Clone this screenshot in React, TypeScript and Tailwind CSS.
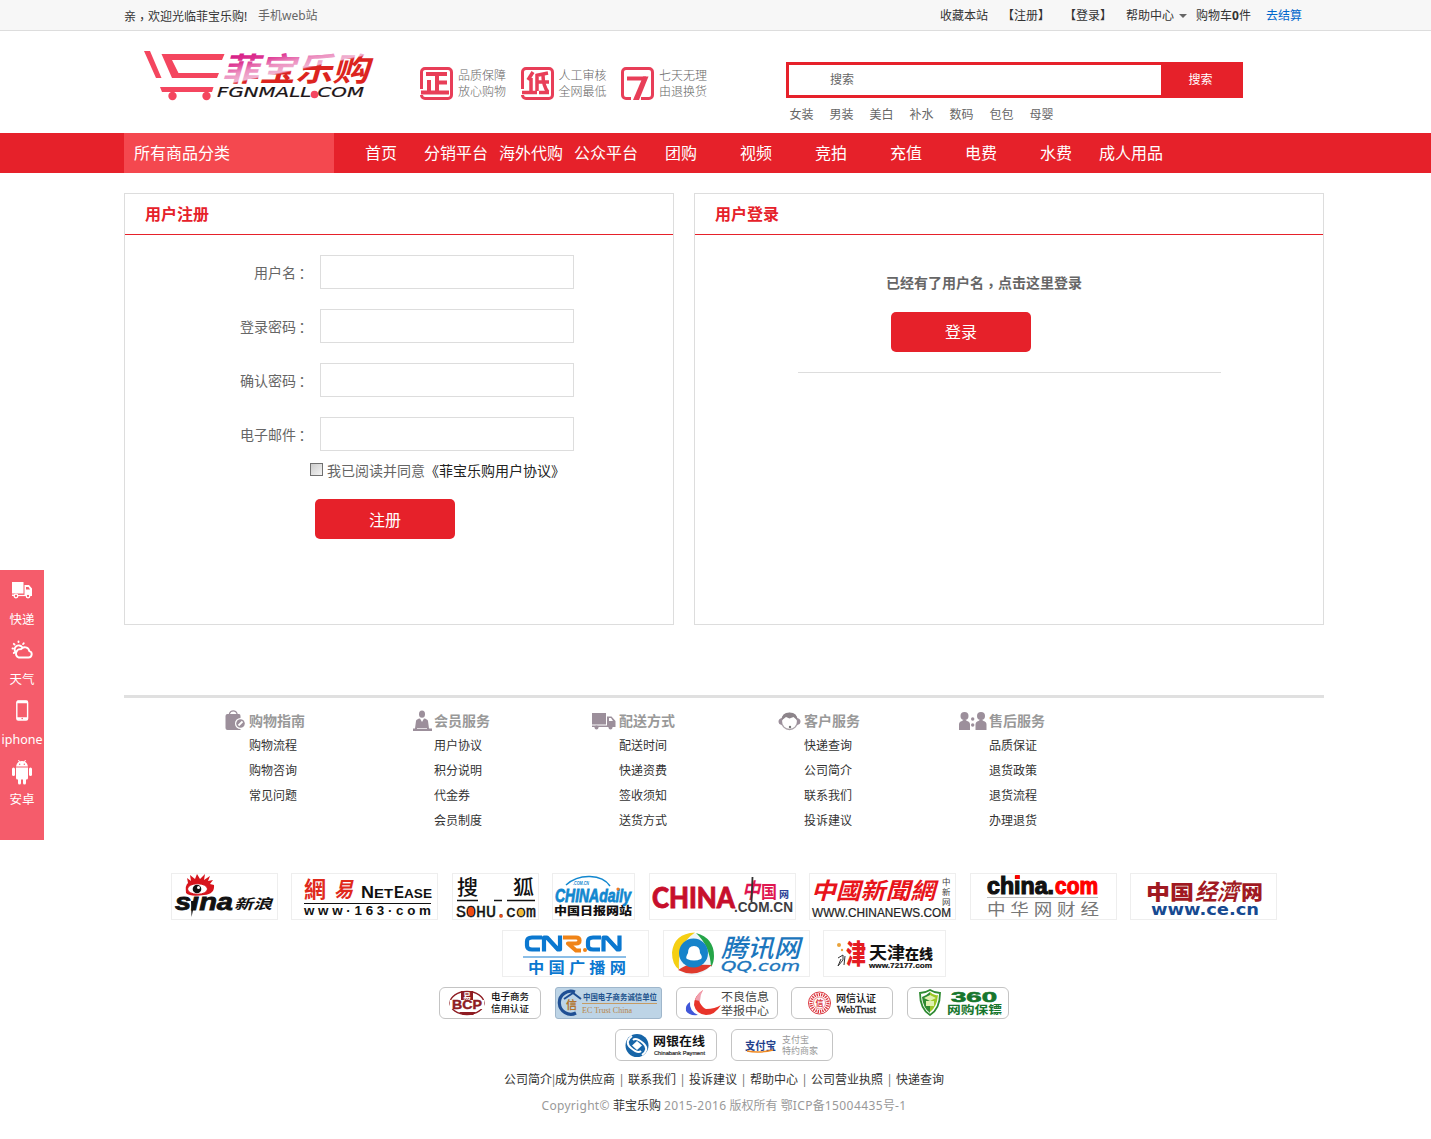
import React from 'react';

const cjk = "font-['Noto_Sans','Noto_Sans_CJK_SC',sans-serif]";
const sans = "font-['Liberation_Sans','Noto_Sans_CJK_SC',sans-serif]";
const serif = "font-['Liberation_Serif','Noto_Sans_CJK_SC',serif]";
const wide = "font-['DejaVu_Sans','Noto_Sans_CJK_SC',sans-serif]";

/** Full-width punctuation centred in its em box. */
const Colon = () => <span className="relative top-px -left-px font-['Noto_Sans_CJK_TC',sans-serif]">：</span>;
const Comma = () => <span className="relative top-[3px] font-['Noto_Sans_CJK_TC',sans-serif]">，</span>;

type TProps = {
  x: number; y: number; s: number; w?: number; f?: string; fill?: string; b?: number | string;
  italic?: boolean; stroke?: string; sw?: number; children: string;
};
/** One line of logo lettering, fitted to a width. */
const T = ({ x, y, s, w, f = cjk, fill = '#111', b = 400, italic, stroke, sw, children }: TProps) => (
  <text x={x} y={y} fontSize={s} textLength={w} lengthAdjust="spacingAndGlyphs" className={f} fill={fill}
    fontWeight={b} fontStyle={italic ? 'italic' : undefined} stroke={stroke} strokeWidth={sw}>
    {children}
  </text>
);

const Logo = () => (
  <svg className="block" width="240" height="60" viewBox="140 45 240 60">
    <defs>
      <linearGradient id="brand" gradientUnits="userSpaceOnUse" x1="300" y1="35.700" x2="307.400" y2="71">
        <stop offset="0" stopColor="#d3127f" /><stop offset="0.4" stopColor="#dd3793" /><stop offset="0.65" stopColor="#ec8fc0" />
        <stop offset="0.88" stopColor="#f0b4d2" /><stop offset="0.93" stopColor="#dc2420" />
      </linearGradient>
    </defs>
    <g fill="#f4465f">
      <path d="M144 51h6l11.500 27h-5.500zM161.500 54h63l-2.500 6h-50l6.500 13h40.500l-2 5h-45zM160 87h53.500l-1.500 5h-50z" />
      <circle cx="172.500" cy="96" r="4.200" /><circle cx="206.500" cy="96" r="4.200" />
    </g>
    <T x={222} y={80.5} s={32.5} w={147} b={700} italic fill="url(#brand)">菲宝乐购</T>
    <T x={217} y={97} s={13.5} w={147} f={wide} italic fill="#1c1416" stroke="#1c1416" sw={0.2}>FGNMALL.COM</T>
    <circle cx="314.500" cy="94.500" r="3.800" fill="#f4465f" />
  </svg>
);

const Seal = ({ kind }: { kind: string }) => (
  <svg className="block shrink-0" width="33" height="33" viewBox="0 0 33 33" fill="none" stroke="#e83e58">
    {kind === '7' ? (
      <>
        <path strokeWidth="3" d="M10 31.500H5A3.500 3.500 0 0 1 1.500 28V5A3.500 3.500 0 0 1 5 1.500H28A3.500 3.500 0 0 1 31.500 5V28a3.500 3.500 0 0 1-3.500 3.500H20" />
        <path strokeWidth="4" d="M6 11.500H25" /><path fill="#e83e58" stroke="none" d="M22 9.500h5.500L18 33H12z" />
      </>
    ) : (
      <>
        <path strokeWidth="3" d="M1.500 22V5a3.500 3.500 0 0 1 3.500-3.500H28A3.500 3.500 0 0 1 31.500 5V28a3.500 3.500 0 0 1-3.500 3.500H5A3.500 3.500 0 0 1 1.500 28" />
        {kind === '正' ? (
          <path strokeWidth="4" d="M6 7H27M17 7V25M18 15.500H27M9 13V25M1 25.500H29" />
        ) : (
          <path strokeWidth="3.500" d="M12 5L7 13M10 11V25M1 25.500H16M27 6L15 8.500M16 7V24M15 15H28M22 8Q22 19 27 25M18 25.500H28" />
        )}
      </>
    )}
  </svg>
);

const badges = [['正', '品质保障', '放心购物'], ['低', '人工审核', '全网最低'], ['7', '七天无理', '由退换货']];
const nav = ['首页', '分销平台', '海外代购', '公众平台', '团购', '视频', '竞拍', '充值', '电费', '水费', '成人用品'];

const g = '#9c8f9b';
const columns = [
  { title: '购物指南', items: ['购物流程', '购物咨询', '常见问题'], icon: (
    <>
      <path fill={g} d="M8.500 6H20q1.500 0 1.500 2v14H8.500q-2 0-2-2V8q0-2 2-2Z" />
      <path fill="none" stroke={g} strokeWidth="1.200" d="M10.500 7V5.500a4 4 0 0 1 7.500 0V7" />
      <circle cx="21.500" cy="15.500" r="5.500" fill="#fff" /><circle cx="21.500" cy="15.500" r="4.300" fill={g} /><path stroke="#fff" strokeWidth="1.800" d="M19.500 17.500l4-4" />
    </>) },
  { title: '会员服务', items: ['用户协议', '积分说明', '代金券', '会员制度'], icon: (
    <>
      <ellipse cx="18" cy="6.200" rx="3" ry="3.600" fill={g} />
      <path fill={g} d="M11 20.500L12 13q.5-2 4-2.500L18 14l2-3.500q3.500.5 4 2.500l1 7.500h3V23H9v-2.500Z" /><path stroke="#fff" strokeWidth=".7" d="M13 20.500h10" />
    </>) },
  { title: '配送方式', items: ['配送时间', '快递资费', '签收须知', '送货方式'], icon: (
    <>
      <path fill={g} d="M3 5H17V16.500H3ZM3 17.500H18V19H3ZM18 8.500H22.500l4 4.500v6H18Z" />
      <path fill="#fff" d="M20 10h2l2 3h-4z" /><circle cx="7.500" cy="19.500" r="2" fill={g} /><circle cx="21.500" cy="19.500" r="2" fill={g} />
    </>) },
  { title: '客户服务', items: ['快递查询', '公司简介', '联系我们', '投诉建议'], icon: (
    <>
      <ellipse cx="15.500" cy="13.500" rx="8" ry="8" fill="#fff" stroke="#aaa2a9" strokeWidth="1.300" />
      <path fill="#8d858b" d="M7.500 12.500q0-8 8-8t8 8l-4-3.500-4 1.500-3.500-1.500z" />
      <path fill={g} d="M8 10v7q-3.500-.5-3.500-3.500T8 10M23 10v7q3.500-.5 3.500-3.500T23 10" /><circle cx="16" cy="19" r="1.200" fill="#777" />
    </>) },
  { title: '售后服务', items: ['品质保证', '退货政策', '退货流程', '办理退货'], icon: (
    <>
      <circle cx="5.500" cy="8" r="4" fill={g} /><circle cx="22" cy="8" r="4" fill={g} />
      <path fill={g} d="M0 22v-5.500q0-3 3-3.500l2.500-2 2.500 2q3 .5 3 3.500V22zM16.500 22v-5.500q0-3 3-3.500l2.500-2 2.500 2q3 .5 3 3.500V22z" />
      <circle cx="13.700" cy="11" r="1.700" fill={g} /><circle cx="13.700" cy="17" r="1.700" fill={g} />
    </>) },
];

type Box = { x: number; w: number; art: React.ReactNode };

const media: Box[] = [
  { x: 171, w: 107, art: (
    <>
      <T x={175} y={910} s={23} w={58} f={sans} b={700} italic stroke="#111" sw={0.8}>sina</T>
      <path fill="#d7141c" d="M186 893q-1-8 2-10l-1-5 4 3-1-6 5 4 2-5 3 5 5-5-1 6 6-4-2 5 5-1-3 4 4 1q1 9-10 10-14 2-18-2z" />
      <ellipse cx="197.500" cy="889" rx="10" ry="5.300" fill="#fff" stroke="#d7141c" strokeWidth="1" /><circle cx="197" cy="889" r="4.300" fill="#111" /><circle cx="198.500" cy="887.500" r="1.500" fill="#fff" />
      <path fill="#111" d="M191 901h4l-3.500 16z" />
      <T x={234} y={909} s={14} w={38} b={700} italic>新浪</T>
    </>) },
  { x: 291, w: 147, art: (
    <>
      <T x={304} y={897} s={22} w={22} b={700} fill="#e02a1c">網</T><T x={334} y={897} s={21} w={19} b={700} fill="#e02a1c" italic>易</T>
      <T x={361} y={898} s={17} w={13} f={sans} b={700}>N</T><T x={374} y={898} s={13} w={19} f={sans} b={700}>ET</T>
      <T x={394} y={898} s={17} w={10} f={sans} b={700}>E</T><T x={404} y={898} s={13} w={28} f={sans} b={700}>ASE</T>
      <path stroke="#111" d="M304 903.500h127" />
      <T x={304} y={915} s={13} w={127} f={sans} b={700}>w w w · 1 6 3 · c o m</T>
    </>) },
  { x: 452, w: 87, art: (
    <>
      <T x={457} y={895} s={20} w={21} b={500}>搜</T><T x={513} y={895} s={20} w={21} b={500}>狐</T>
      <path stroke="#111" strokeWidth="1.500" d="M457 900.500h21M494 900.500h8M507 900.500h28" />
      <T x={456} y={916.5} s={16} w={80} f="font-['Liberation_Mono',monospace]" stroke="#111" sw={0.4}>SOHU.com</T>
      <ellipse cx="471" cy="911.500" rx="3.200" ry="4.500" fill="#f04c14" /><ellipse cx="521" cy="912.500" rx="2.800" ry="3.500" fill="#f2bd3a" /><circle cx="501" cy="916" r="1.800" fill="#f04c14" />
    </>) },
  { x: 552, w: 83, art: (
    <>
      <path fill="none" stroke="#1287cf" strokeWidth="1.500" d="M566 885q10-9 24-8.500t20 9.500" />
      <T x={573} y={885} s={5} w={16} f={sans} b={700} italic fill="#1287cf">.COM.CN</T>
      <T x={555} y={901.5} s={18} w={76} f={sans} b={700} italic fill="#1287cf" stroke="#1287cf" sw={0.8}>CHINAdaily</T>
      <circle cx="618" cy="889" r="1.600" fill="#f47a20" />
      <T x={554} y={914.5} s={11} w={78} b={900}>中国日报网站</T>
    </>) },
  { x: 649, w: 147, art: (
    <>
      <T x={652} y={908} s={27.5} w={83} f="font-['Lato',sans-serif]" b={900} fill="#c70f2c" stroke="#c70f2c" sw={0.8}>CHINA</T>
      <T x={742} y={898} s={21} w={18} b={700} fill="#df1650" italic>中</T><path stroke="#333" strokeWidth="1.800" d="M752.500 877l-1 25" />
      <T x={761} y={898} s={17} w={16} b={700} fill="#df1650">国</T><T x={779} y={898} s={10} w={10} b={700} fill="#2a3e96">网</T>
      <T x={734} y={912} s={14} w={59} f={sans} b={700} fill="#3d3d42">.COM.CN</T>
    </>) },
  { x: 809, w: 147, art: (
    <>
      <T x={811} y={899} s={23} w={124} b={700} italic fill="#e8141b">中國新聞網</T>
      <T x={942} y={885} s={8.5} fill="#444">中</T><T x={942} y={895} s={8.5} fill="#444">新</T><T x={942} y={905} s={8.5} fill="#444">网</T>
      <T x={812} y={917} s={12} w={139} f={sans} fill="#222" stroke="#222" sw={0.2}>WWW.CHINANEWS.COM</T>
    </>) },
  { x: 970, w: 147, art: (
    <>
      <T x={987} y={894} s={24} w={67} f={sans} b={700} stroke="#111" sw={1.2}>china.</T>
      <T x={1055} y={894} s={24} w={43} f={sans} b={700} fill="#f00" stroke="#f00" sw={1.2}>com</T>
      <path fill="none" stroke="#f00" strokeWidth="4.500" d="M1017.500 875v4" />
      <path stroke="#bbb" d="M987 897.500h111" />
      <T x={987} y={914.5} s={15.5} w={112} fill="#777">中 华 网 财 经</T>
    </>) },
  { x: 1130, w: 147, art: (
    <>
      <T x={1146} y={900} s={20} w={48} b={900} fill="#a01922">中国</T><T x={1195} y={900} s={23} w={44} b={700} italic fill="#a01922">经濟</T>
      <T x={1241} y={900} s={20} w={22} b={900} fill="#a01922">网</T>
      <T x={1151} y={915} s={15.5} w={108} f={wide} b={700} fill="#174a91">www.ce.cn</T>
    </>) },
];

const media2: Box[] = [
  { x: 502, w: 147, art: (
    <>
      <g fill="none" stroke="#0b78d0" strokeWidth="4.200" strokeLinejoin="round">
        <path d="M542 937.500h-10q-5 0-5 4v4q0 4 5 4h8M544 951.500v-14h3l11 12h2v-14M601 937.500h-8q-5 0-5 4v4q0 4 5 4h7M603.500 951.500v-14h3l11 12h2v-14" />
        <path stroke="#f08418" d="M563 937.500h13q3.500 0 3.500 3t-3.500 3h-8l8 7h5" />
      </g>
      <circle cx="585" cy="950" r="2" fill="#f08418" />
      <path stroke="#64a8df" strokeWidth="1.500" d="M523 957h103" />
      <T x={528} y={972.500} s={15} w={98} b={700} fill="#0b78d0">中 国 广 播 网</T>
    </>) },
  { x: 662, w: 147, art: (
    <>
      <circle cx="692" cy="954" r="21" fill="#eef5fa" />
      <path fill="#f5cf13" d="M694 932.500q-21 1-23 20 0 12 7 17-2-25 16-37z" /><path fill="#25a548" d="M695 933q18 5 18 23 0 7-3 11-1-21-15-34z" /><path fill="#df3a2d" d="M677 970q18 9 34-5-10 0-17-1t-17 6z" />
      <circle cx="692.500" cy="953" r="14.500" fill="#1683ca" /><path fill="#fff" d="M686 959q-2-1 1-6 0-7 6-7t6 7q3 4 1 6-7 3-14 0" />
      <T x={720} y={956.500} s={25} w={79} fill="#1c76bd" b={500} italic>腾讯网</T>
      <T x={720} y={971} s={14} w={79} f={wide} fill="#1c76bd" stroke="#1c76bd" sw={0.3} italic>QQ.com</T>
    </>) },
  { x: 823, w: 123, art: (
    <>
      <circle cx="839" cy="945" r="2" fill="#e9a33b" /><circle cx="842" cy="950" r="1.200" fill="#e9a33b" /><path fill="none" stroke="#333" d="M838 958l5-3v5l-5 6 3-7m3 6 1-9" />
      <T x={846} y={964} s={27} w={20} b={900} fill="#e51c22">津</T>
      <T x={869} y={959} s={17} w={36} b={700}>天津</T><T x={905} y={959} s={14} w={28} b={900}>在线</T>
      <T x={869} y={968} s={8} w={63} f={sans} b={700} stroke="#111" sw={0.2}>www.72177.com</T>
    </>) },
];

const trust: Box[] = [
  { x: 439, w: 102, art: (
    <>
      <ellipse cx="467" cy="1003" rx="17" ry="11.500" fill="none" stroke="#8e1c22" strokeWidth="1.300" />
      <path fill="#8e1c22" d="M461 991h12v9h-12z" /><T x={463} y={999} s={8} fill="#fff" b={700}>易</T>
      <rect x="450" y="1000" width="34" height="9" fill="#fff" />
      <T x={452} y={1009} s={12} w={30} f={sans} b={700} fill="#8e1c22" stroke="#8e1c22" sw={0.4}>BCP</T><path fill="#8e1c22" d="M459 1012h17l-3 3h-10z" />
      <T x={491} y={1000} s={9.5} w={38} b={500}>电子商务</T><T x={491} y={1012} s={9.500} w={38} b={500}>信用认证</T>
    </>) },
  { x: 555, w: 107, art: (
    <>
      <path fill="none" stroke="#1f4f94" strokeWidth="3.200" d="M575 992a11.500 11.500 0 1 0 1 21" /><path fill="none" stroke="#1f4f94" strokeWidth="2" d="M564 999l9-6 8 6" />
      <T x={566} y={1009} s={11} b={700} fill="#b2742f">信</T>
      <T x={583} y={1000} s={8} w={74} b={700} fill="#24548e">中国电子商务诚信单位</T><path stroke="#c59b63" d="M582 1003.500h75" />
      <T x={582} y={1013} s={7.5} w={50} f={serif} fill="#b98649">EC Trust China</T>
    </>) },
  { x: 676, w: 102, art: (
    <>
      <path fill="#e8342a" d="M703 990q-6 8-3 13t6 6q9 0 15-4-6 10-15 10-10-1-12-10 0-9 9-15z" /><path fill="#4157d9" d="M690 1002q-1 9 8 13-9 1-12-4-1-6 4-9z" /><path fill="#f0a0b0" d="M703 990q-6 4-8 10l5 1q0-6 3-11z" />
      <T x={721} y={1001} s={11.5} w={48} fill="#444">不良信息</T><T x={721} y={1015} s={11.500} w={48} fill="#444">举报中心</T>
    </>) },
  { x: 791, w: 102, art: (
    <>
      <circle cx="819.500" cy="1003" r="11" fill="none" stroke="#dc3840" strokeWidth="1" /><circle cx="819.500" cy="1003" r="8.500" fill="none" stroke="#dc3840" strokeWidth="3" strokeDasharray="1.300 1" /><circle cx="819.500" cy="1003" r="6" fill="#fff" stroke="#dc3840" strokeWidth=".6" />
      <T x={815.5} y={1006} s={8} b={700} fill="#dc3840">信</T>
      <T x={836} y={1002} s={10} w={40} b={500}>网信认证</T><T x={837} y={1013} s={9.5} w={39} f={serif} stroke="#222" sw={0.3}>WebTrust</T>
    </>) },
  { x: 907, w: 102, art: (
    <>
      <path fill="#fff" stroke="#2f8b32" strokeWidth="1.800" d="M930 990q5 3 10 3 0 16-10 22-10-6-10-22 5 0 10-3z" /><path fill="#2f8b32" d="M930 992v21q-7-5-8-16 5-2 8-5z" /><path fill="#9cc726" d="M930 992q4 4 8 3-1 12-8 17z" /><path fill="#e0f1b0" d="M924 998l6-3 6 3-6 3zM926 1001h8v5h-8z" />
      <T x={951} y={1001.5} s={15} w={46} f={sans} b={700} fill="#17762d" stroke="#17762d" sw={0.6}>360</T><T x={947} y={1014} s={11.5} w={55} b={700} fill="#17762d">网购保镖</T>
    </>) },
];

const pay: Box[] = [
  { x: 615, w: 102, art: (
    <>
      <circle cx="637" cy="1045.500" r="11.500" fill="#1765a8" /><path fill="none" stroke="#fff" strokeWidth="2" d="M632 1036q-8 6-1 12 7 6 10 3M642 1055q8-6 1-12-7-6-10-3" /><path fill="#fff" d="M637 1041l5 4.500-5 4.500-5-4.500z" />
      <T x={653} y={1046} s={12} w={52} b={700}>网银在线</T><T x={654} y={1055} s={6} w={51} f={sans} stroke="#333" sw={0.2}>Chinabank Payment</T>
    </>) },
  { x: 731, w: 102, art: (
    <>
      <T x={745} y={1049.5} s={11} w={31} b={700} fill="#23408c">支付宝</T><path fill="none" stroke="#f08a22" strokeWidth="1.500" d="M747 1051q12 2.500 26-1" />
      <T x={782} y={1043} s={9} w={27} fill="#999">支付宝</T><T x={782} y={1054} s={9} w={36} fill="#999">特约商家</T>
    </>) },
];

const MediaRow = ({ items, y }: { items: Box[]; y: number }) => (
  <div className="flex justify-center gap-[13.43px]">
    {items.map((m) => (
      <div key={m.x} className="h-[47px] shrink-0 border border-[#eee] bg-white">
        <svg className="block" width={m.w - 2} height="45" viewBox={`${m.x + 1} ${y + 1} ${m.w - 2} 45`}>{m.art}</svg>
      </div>
    ))}
  </div>
);

const TrustRow = ({ items, y }: { items: Box[]; y: number }) => (
  <div className="flex justify-center gap-[13.800px]">
    {items.map((m) => (
      <div key={m.x} className={m.x === 555 ? 'h-8 shrink-0 rounded-[3px] border border-[#9fb6cb] bg-[#bdd4e6]' : 'h-8 shrink-0 rounded-[6px] border border-[#c4c4c4] bg-white'}>
        <svg className="block" width={m.w - 2} height="30" viewBox={`${m.x + 1} ${y + 1} ${m.w - 2} 30`}>{m.art}</svg>
      </div>
    ))}
  </div>
);

const side = [
  { label: '快递', icon: (
    <>
      <path fill="#fff" d="M1 2h11.500v11.500H1zM1 14.500h2.500V16H1zM13.500 5H18l3 3.500V16h-7.500z" /><path fill="#f55c6b" d="M15 7h2.500L19 9.500h-4z" />
      <circle cx="5" cy="16" r="1.800" fill="#f55c6b" stroke="#fff" strokeWidth="1.300" /><circle cx="17" cy="16" r="1.800" fill="#f55c6b" stroke="#fff" strokeWidth="1.300" /><path stroke="#fff" strokeWidth="1.200" d="M7 15.500h7" />
    </>) },
  { label: '天气', icon: (
    <g fill="none" stroke="#fff" strokeWidth="1.900" strokeLinecap="round" strokeLinejoin="round">
      <path d="M7.500 17.500h10a3.200 3.200 0 0 0 .8-6.300 4.600 4.600 0 0 0-8.300-2A4.400 4.400 0 0 0 7.500 17.500zM4.500 12a4 4 0 1 1 6.500-5M7.500 1.500v.5M2.800 3.800l.7.700M1.500 8.500h.5M12.700 3.300l-.6.700M2.800 13l.5-.5" />
    </g>) },
  { label: 'iphone', icon: (
    <><rect x="5.800" y="1" width="10.800" height="19" rx="1.500" fill="none" stroke="#fff" strokeWidth="1.400" /><path stroke="#fff" strokeWidth="2.500" d="M6 2h10.500M6 18.500h10.500" /><circle cx="11.200" cy="18.500" r=".8" fill="#f55c6b" /></>) },
  { label: '安卓', icon: (
    <g fill="#fff" transform="translate(0 1)">
      <path d="M5 5.500Q6 0 11 0t6 5.500zM5 6.500h12V17q0 1.500-1.500 1.500h-9Q5 18.500 5 17z" />
      <path stroke="#fff" strokeWidth="1" d="M7.500-1l1.200 2.200M14.500-1l-1.200 2.200" />
      <rect x="1" y="6.500" width="3" height="8.500" rx="1.500" /><rect x="18" y="6.500" width="3" height="8.500" rx="1.500" />
      <rect x="7" y="16" width="3" height="7.500" rx="1.500" /><rect x="12" y="16" width="3" height="7.500" rx="1.500" />
      <g fill="#f55c6b"><circle cx="8.700" cy="3.300" r=".7" /><circle cx="13.300" cy="3.300" r=".7" /></g>
    </g>) },
];

const fields = ['用户名', '登录密码', '确认密码', '电子邮件'];
const links = ['联系我们', '投诉建议', '帮助中心', '公司营业执照', '快递查询'];

export default function App() {
  return (
    <div className="relative h-[1139px] w-full overflow-hidden bg-white font-['Noto_Sans','Noto_Sans_CJK_SC',sans-serif] text-xs text-[#666]">
      <div className="h-[31px] border-b border-[#ddd] bg-[#f7f7f7]">
        <div className="ml-[124px] flex h-[30px] w-[1200px] items-center whitespace-nowrap pt-0.5 leading-[28px] text-[#333]">
          <span className="w-[134px]">亲<Comma />欢迎光临菲宝乐购!</span>
          <span className="text-[#666]">手机web站</span>
          <div className="ml-auto mr-[22px] flex items-center">
            <span className="w-[62px]">收藏本站</span>
            <span className="w-[62px]">【注册】</span>
            <span className="w-[62px]">【登录】</span>
            <span className="w-[53px]">帮助中心</span>
            <span className="mr-[9px] border-x-4 border-t-4 border-x-transparent border-t-[#666]" />
            <span className="w-[70px]">购物车<b>0</b>件</span>
            <span className="text-[#0066cc]">去结算</span>
          </div>
        </div>
      </div>

      <header className="ml-[124px] flex h-[102px] w-[1200px]">
        <div className="ml-4 mt-[14px] w-[280px]"><Logo /></div>
        <div className="mt-9 flex w-[366px] gap-[14.500px]">
          {badges.map(([k, a, b]) => (
            <div key={k} className="flex h-[33px] gap-[5px]">
              <Seal kind={k} />
              <div className="mt-px w-12 whitespace-nowrap font-light leading-4"><p>{a}</p><p>{b}</p></div>
            </div>
          ))}
        </div>
        <div className="mt-[31px]">
          <div className="flex h-9 w-[457px] bg-[#e6212a] p-[3px]">
            <div className="w-[372px] bg-white pl-[41px] leading-[29px]">搜索</div>
            <div className="flex-1 text-center leading-[29px] text-white">搜索</div>
          </div>
          <div className="flex gap-4 pl-[3.500px] leading-[33px]">
            {['女装', '男装', '美白', '补水', '数码', '包包', '母婴'].map((w) => <span key={w}>{w}</span>)}
          </div>
        </div>
      </header>

      <nav className="h-10 bg-[#e6212a] text-base leading-10 text-white">
        <div className="ml-[124px] flex w-[1200px] whitespace-nowrap">
          <div className="w-[210px] bg-[#f4484f] pl-[10px]">所有商品分类</div>
          <div className="ml-[9.500px] flex">
            {nav.map((n) => <div key={n} className="flex w-[75px] justify-center">{n}</div>)}
          </div>
        </div>
      </nav>

      <main className="ml-[124px] mt-5 flex h-[432px] w-[1200px] gap-5 text-sm">
        <section className="w-[550px] border border-[#ddd]">
          <h2 className="h-[41px] border-b border-[#e6212a] pl-5 text-base font-bold leading-10 text-[#e6212a]">用户注册</h2>
          <div className="mt-5 flex flex-col gap-5">
            {fields.map((f) => (
              <label key={f} className="flex h-[34px] items-center">
                <span className="w-[185px] text-right">{f}<Colon /></span>
                <input className="ml-[10px] h-[34px] w-[254px] border border-[#ddd] outline-none" />
              </label>
            ))}
          </div>
          <div className="ml-[185px] mt-[10px] flex h-5 items-center whitespace-nowrap">
            <span className="-mt-1 mr-1 h-[13px] w-[13px] border border-[#707070] bg-linear-to-br from-[#ccc] to-[#f4f4f4]" />
            我已阅读并同意<span className="text-[#222]">《菲宝乐购用户协议》</span>
          </div>
          <button className="ml-[190px] mt-[18px] block h-10 w-[140px] rounded-[5px] bg-[#e6212a] pt-0.5 text-base text-white">注册</button>
        </section>
        <section className="w-[630px] border border-[#ddd]">
          <h2 className="h-[41px] border-b border-[#e6212a] pl-5 text-base font-bold leading-10 text-[#e6212a]">用户登录</h2>
          <p className="ml-[191px] mt-[37px] h-5 font-bold leading-5">已经有了用户名<Comma />点击这里登录</p>
          <button className="ml-[196px] mt-5 block h-10 w-[140px] rounded-[5px] bg-[#e6212a] text-base text-white">登录</button>
          <div className="ml-[103px] mt-5 w-[423px] border-t border-[#ddd]" />
        </section>
      </main>

      <footer className="ml-[124px] mt-[70px] w-[1200px] border-t-[3px] border-[#e0e0e0]">
        <div className="ml-[95px] flex h-[175px] pt-[10px]">
          {columns.map((c) => (
            <div key={c.title} className="w-[185px]">
              <div className="flex h-[25px] items-start">
                <svg className="block shrink-0" width="30" height="24" viewBox="0 0 30 24">{c.icon}</svg>
                <h3 className="pt-px text-sm font-bold leading-6 text-[#999]">{c.title}</h3>
              </div>
              <ul className="ml-[30px] leading-[25px] text-[#333]">{c.items.map((i) => <li key={i}>{i}</li>)}</ul>
            </div>
          ))}
        </div>
        <div className="flex flex-col gap-[10px]">
          <MediaRow items={media} y={873} />
          <MediaRow items={media2} y={930} />
          <TrustRow items={trust} y={987} />
          <TrustRow items={pay} y={1029} />
        </div>
        <div className="mt-[6px] flex h-[26px] items-center justify-center text-[#333]">
          <span>公司简介</span><span className="flex w-[3px] justify-center text-[#777]">|</span><span>成为供应商</span>
          {links.map((l) => (
            <React.Fragment key={l}><span className="w-[13px] text-center text-[#777]">|</span><span>{l}</span></React.Fragment>
          ))}
        </div>
        <p className="text-center leading-[26px] text-[#999]">
          <span className="tracking-[0.3px]">Copyright©</span> <span className="text-[#333]">菲宝乐购</span> <span className="tracking-[0.400px]">2015-2016</span> 版权所有 鄂<span className="tracking-[0.400px]">ICP</span>备<span className="tracking-[0.400px]">15004435</span>号<span className="tracking-[0.400px]">-1</span>
        </p>
      </footer>

      <aside className="absolute left-0 top-[570px] flex h-[270px] w-11 flex-col bg-[#f55c6b] pt-[10px] text-white">
        {side.map((s) => (
          <div key={s.label} className="flex h-[60px] flex-col items-center">
            <svg className="block shrink-0 overflow-visible" width="22" height="21" viewBox="0 0 22 21">{s.icon}</svg>
            <span className="mt-[9px] text-[12.5px] leading-5">{s.label}</span>
          </div>
        ))}
      </aside>
    </div>
  );
}
